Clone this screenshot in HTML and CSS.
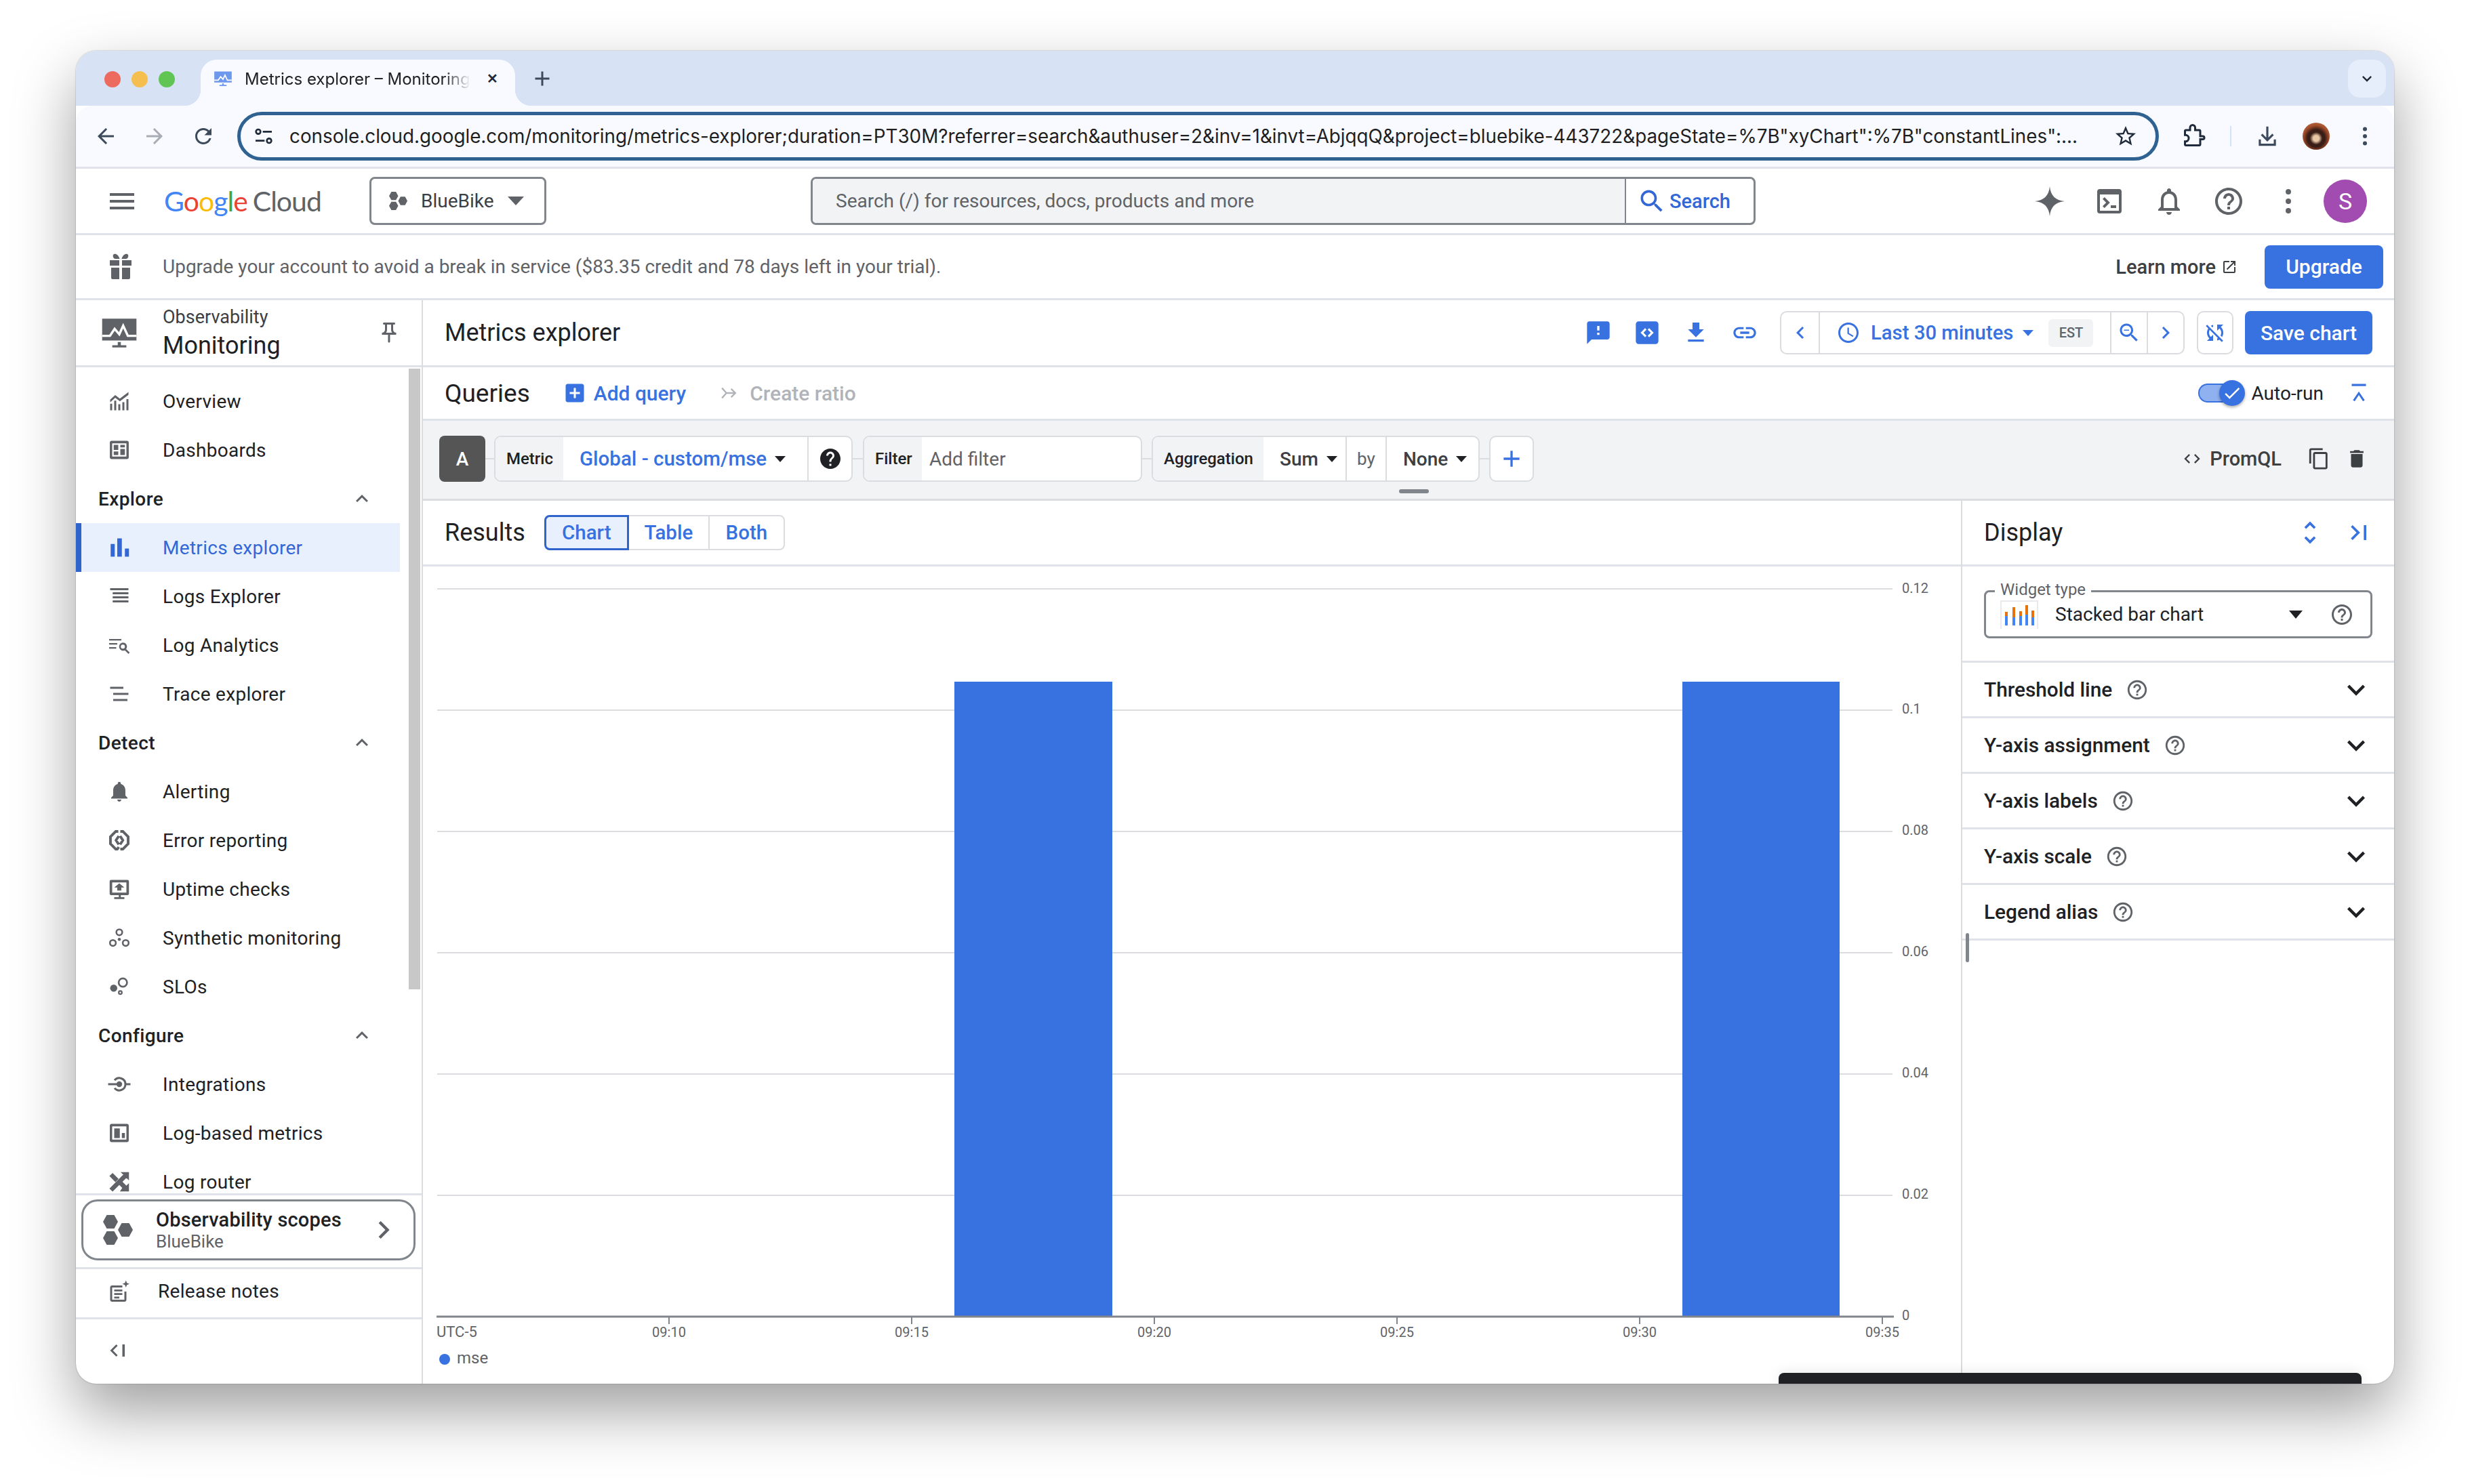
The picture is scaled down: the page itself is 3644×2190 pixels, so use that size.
FILE: index.html
```html
<!DOCTYPE html>
<html lang="en">
<head>
  <meta charset="UTF-8" />
  <title>Metrics explorer – Monitoring</title>
  <link rel="stylesheet" href="styles.css">
</head>
<body>
  <!-- icon sprite -->
  <svg class="sprite">
    <symbol id="i-menu" viewBox="0 0 24 24"><path d="M3 18h18v-2H3v2zm0-5h18v-2H3v2zm0-7v2h18V6H3z"/></symbol>
    <symbol id="i-back" viewBox="0 0 24 24"><path d="M20 11H7.83l5.59-5.59L12 4l-8 8 8 8 1.41-1.41L7.83 13H20v-2z"/></symbol>
    <symbol id="i-forward" viewBox="0 0 24 24"><path d="M4 11h12.17l-5.59-5.59L12 4l8 8-8 8-1.41-1.41L16.17 13H4v-2z"/></symbol>
    <symbol id="i-reload" viewBox="0 0 24 24"><path d="M17.65 6.35C16.2 4.9 14.21 4 12 4c-4.42 0-7.99 3.58-7.99 8s3.57 8 7.99 8c3.73 0 6.84-2.55 7.73-6h-2.08c-.82 2.33-3.04 4-5.65 4-3.31 0-6-2.69-6-6s2.69-6 6-6c1.66 0 3.14.69 4.22 1.78L13 11h7V4l-2.35 2.35z"/></symbol>
    <symbol id="i-tune" viewBox="0 0 24 24"><path d="M11 6h10v2H11zM3 16h10v2H3z"/><path d="M6 3.5a3.5 3.5 0 1 1 0 7 3.5 3.5 0 0 1 0-7zm0 2a1.5 1.5 0 1 0 0 3 1.5 1.5 0 0 0 0-3zM18 13.5a3.5 3.5 0 1 1 0 7 3.5 3.5 0 0 1 0-7zm0 2a1.5 1.5 0 1 0 0 3 1.5 1.5 0 0 0 0-3z"/></symbol>
    <symbol id="i-star" viewBox="0 0 24 24"><path d="M22 9.24l-7.19-.62L12 2 9.19 8.63 2 9.24l5.46 4.73L5.82 21 12 17.27 18.18 21l-1.63-7.03L22 9.24zM12 15.4l-3.76 2.27 1-4.28-3.32-2.88 4.38-.38L12 6.1l1.71 4.04 4.38.38-3.32 2.88 1 4.28L12 15.4z"/></symbol>
    <symbol id="i-ext" viewBox="0 0 24 24"><path fill="none" stroke="currentColor" stroke-width="2" d="M20.5 12H18V7a1 1 0 0 0-1-1h-4V3.5a2.5 2.5 0 0 0-5 0V6H4a1 1 0 0 0-1 1v3.8h.5a3.2 3.2 0 0 1 0 6.4H3V20a1 1 0 0 0 1 1h13a1 1 0 0 0 1-1v-5h2.5a1.5 1.5 0 0 0 0-3z"/></symbol>
    <symbol id="i-download" viewBox="0 0 24 24"><path d="M11 3h2v10.2l3.6-3.6L18 11l-6 6-6-6 1.4-1.4 3.6 3.6V3zM4 15h2v4h12v-4h2v6H4v-6z"/></symbol>
    <symbol id="i-dots" viewBox="0 0 24 24"><circle cx="12" cy="5" r="2"/><circle cx="12" cy="12" r="2"/><circle cx="12" cy="19" r="2"/></symbol>
    <symbol id="i-hex" viewBox="0 0 44 44"><path d="M5.500 0h11L22 10l-5.500 10h-11L0 10zM5.500 24h11L22 34l-5.500 10h-11L0 34zM27.500 12h11L44 22l-5.500 10h-11L22 22z"/></symbol>
    <symbol id="i-search" viewBox="0 0 24 24"><path d="M15.5 14h-.79l-.28-.27C15.41 12.59 16 11.11 16 9.5 16 5.91 13.09 3 9.5 3S3 5.91 3 9.5 5.91 16 9.5 16c1.61 0 3.09-.59 4.23-1.57l.27.28v.79l5 4.99L20.49 19l-4.99-5zm-6 0C7.01 14 5 11.99 5 9.5S7.01 5 9.5 5 14 7.01 14 9.5 11.99 14 9.5 14z"/></symbol>
    <symbol id="i-spark" viewBox="0 0 24 24"><path d="M12 1c.6 6.8 4.2 10.4 11 11-6.800.6-10.400 4.200-11 11-.6-6.800-4.200-10.400-11-11 6.800-.6 10.400-4.200 11-11z"/></symbol>
    <symbol id="i-terminal" viewBox="0 0 24 24"><path d="M5 3h14a2 2 0 0 1 2 2v14a2 2 0 0 1-2 2H5a2 2 0 0 1-2-2V5a2 2 0 0 1 2-2zm0 4v12h14V7H5zm2 3.400L8.400 9l4 4-4 4L7 15.600 9.600 13 7 10.400zM13 15h4v2h-4z"/></symbol>
    <symbol id="i-bell-o" viewBox="0 0 24 24"><path d="M12 22c1.100 0 2-.9 2-2h-4c0 1.100.9 2 2 2zm6-6v-5c0-3.070-1.630-5.640-4.500-6.320V4c0-.83-.67-1.500-1.500-1.500s-1.500.67-1.500 1.500v.68C7.640 5.360 6 7.920 6 11v5l-2 2v1h16v-1l-2-2zm-2 1H8v-6c0-2.480 1.510-4.500 4-4.500s4 2.020 4 4.500v6z"/></symbol>
    <symbol id="i-bell" viewBox="0 0 24 24"><path d="M12 22c1.100 0 2-.9 2-2h-4c0 1.100.89 2 2 2zm6-6v-5c0-3.070-1.640-5.640-4.500-6.320V4c0-.83-.67-1.500-1.500-1.500s-1.500.67-1.500 1.500v.68C7.630 5.360 6 7.920 6 11v5l-2 2v1h16v-1l-2-2z"/></symbol>
    <symbol id="i-help" viewBox="0 0 24 24"><path d="M11 18h2v-2h-2v2zm1-16C6.480 2 2 6.480 2 12s4.480 10 10 10 10-4.480 10-10S17.520 2 12 2zm0 18c-4.410 0-8-3.590-8-8s3.590-8 8-8 8 3.590 8 8-3.590 8-8 8zm0-14c-2.210 0-4 1.790-4 4h2c0-1.100.9-2 2-2s2 .9 2 2c0 2-3 1.750-3 5h2c0-2.250 3-2.500 3-5 0-2.210-1.790-4-4-4z"/></symbol>
    <symbol id="i-help-fill" viewBox="0 0 24 24"><path d="M12 2C6.480 2 2 6.480 2 12s4.480 10 10 10 10-4.480 10-10S17.520 2 12 2zm1 17h-2v-2h2v2zm2.070-7.750l-.9.92C13.450 12.900 13 13.500 13 15h-2v-.5c0-1.100.45-2.100 1.170-2.830l1.240-1.260c.37-.36.59-.86.59-1.410 0-1.100-.9-2-2-2s-2 .9-2 2H8c0-2.210 1.790-4 4-4s4 1.790 4 4c0 .88-.36 1.680-.93 2.250z"/></symbol>
    <symbol id="i-gift" viewBox="0 0 24 24"><path d="M4 7h7v4H4zM13 7h7v4h-7zM5 12.500h6V21H6a1 1 0 0 1-1-1zM13 12.500h6V20a1 1 0 0 1-1 1h-5zM7 2.500c1.500-.6 3.300.4 4.300 3.500H8C6.500 6 5.700 3.200 7 2.500zM17 2.500c1.300.7.500 3.500-1 3.500h-3.300c1-3.100 2.800-4.100 4.300-3.500z"/></symbol>
    <symbol id="i-open" viewBox="0 0 24 24"><path d="M19 19H5V5h7V3H5c-1.110 0-2 .9-2 2v14c0 1.100.89 2 2 2h14c1.100 0 2-.9 2-2v-7h-2v7zM14 3v2h3.590l-9.830 9.830 1.410 1.410L19 6.410V10h2V3h-7z"/></symbol>
    <symbol id="i-monitor" viewBox="0 0 48 40"><path d="M2 2h44v28H2z"/><path d="M22 32h4v4h7v3H15v-3h7z"/><path d="M2 24l10 0 6-9 6 7 5-11 6 13h11" fill="none" stroke="#fff" stroke-width="3"/></symbol>
    <symbol id="i-pin" viewBox="0 0 24 24"><path d="M14 4v5c0 1.120.37 2.160 1 3H9c.65-.86 1-1.900 1-3V4h4m3-2H7c-.55 0-1 .45-1 1s.45 1 1 1h1v5c0 1.660-1.340 3-3 3v2h5.970v7l1 1 1-1v-7H19v-2c-1.660 0-3-1.340-3-3V4h1c.55 0 1-.45 1-1s-.45-1-1-1z"/></symbol>
    <symbol id="i-overview" viewBox="0 0 24 24"><path d="M3 14.500h2V21H3zM7 11.500h2V21H7zM11 15h2v6h-2zM15 13h2v8h-2zM19 10h2v11h-2zM3 10.500L8 6l4.500 3.500L21 3v2.800l-8.400 6.300L8 8.600l-5 4.500z"/></symbol>
    <symbol id="i-dash" viewBox="0 0 24 24"><path d="M4.500 3h15A1.800 1.800 0 0 1 21.300 4.800v14.400a1.800 1.800 0 0 1-1.800 1.800h-15a1.800 1.800 0 0 1-1.800-1.800V4.800A1.800 1.800 0 0 1 4.500 3zM5 5.500v13h14v-13H5zM6.500 7H11v5H6.500zM13 7h4.500v2.500H13zM13 11h4.500v6H13zM6.500 13.500H11V17H6.500z"/></symbol>
    <symbol id="i-bars" viewBox="0 0 24 24"><path d="M3.500 8.500h4V21h-4zM10 3h4.500v18H10zM17.500 13h4v8h-4z"/></symbol>
    <symbol id="i-logs" viewBox="0 0 24 24"><path d="M3 4h18v2H3zM5.500 8h15.500v2H5.500zM5.500 12h15.500v2H5.500zM5.500 16h15.500v2H5.500z"/></symbol>
    <symbol id="i-analytics" viewBox="0 0 24 24"><path d="M2 6h12v1.500H2zM2 10h8v1.500H2zM2 14h7v1.500H2z"/><path d="M15.500 9.500a4 4 0 0 1 3.200 6.400l3.500 3.500-1.200 1.200-3.500-3.500a4 4 0 1 1-2-7.600zm0 2a2 2 0 1 0 0 4 2 2 0 0 0 0-4z"/></symbol>
    <symbol id="i-trace" viewBox="0 0 24 24"><path d="M3 5h13v2H3zM6 11h15v2H6zM6 17h14v2H6z"/></symbol>
    <symbol id="i-error" viewBox="0 0 24 24"><path fill="none" stroke="currentColor" stroke-width="2.600" d="M11 3.300H8.500L3.300 8.500v7l5.200 5.200H10l1.500-2M13 3.300h2.500l5.200 5.200v7l-5.200 5.200H13M11.500 7.800L8.800 12l2.700 4.200M12.800 7.800l2.700 4.200-2.700 4.200"/></symbol>
    <symbol id="i-uptime" viewBox="0 0 24 24"><path d="M4 3h16a1.500 1.500 0 0 1 1.500 1.500v12A1.500 1.500 0 0 1 20 18h-6.500v2H17v1.800H7V20h4.500v-2H4a1.500 1.500 0 0 1-1.500-1.500v-12A1.500 1.500 0 0 1 4 3zm1 2.500v10h14v-10H5zm7 .8l5 4.200h-3v3h-4v-3H7z"/></symbol>
    <symbol id="i-synth" viewBox="0 0 24 24"><g fill="none" stroke="currentColor" stroke-width="1.700"><circle cx="12" cy="6.500" r="2.900"/><circle cx="5.700" cy="17" r="2.900"/><circle cx="18.300" cy="17" r="2.900"/></g><circle cx="12" cy="13.500" r="1.500"/></symbol>
    <symbol id="i-slo" viewBox="0 0 24 24"><circle cx="6.500" cy="13.500" r="3.500"/><path d="M15.500 3a5 5 0 1 1 0 10 5 5 0 0 1 0-10zm0 1.800a3.200 3.200 0 1 0 0 6.400 3.200 3.200 0 0 0 0-6.400zM13 15.500a2.300 2.300 0 1 1 0 4.600 2.300 2.300 0 0 1 0-4.600zm0 1.500a.8.8 0 1 0 0 1.600.8.8 0 0 0 0-1.600z"/></symbol>
    <symbol id="i-integ" viewBox="0 0 24 24"><path d="M1 11h8.500v2H1zM18 11h5v2h-5zM6.500 7.600A7 7 0 0 1 19 12a7 7 0 0 1-12.500 4.400l1.700-1.100A5 5 0 0 0 17 12a5 5 0 0 0-8.800-3.300z"/><circle cx="12" cy="12" r="2.800"/></symbol>
    <symbol id="i-logmetric" viewBox="0 0 24 24"><path d="M4.500 3h15a1.800 1.800 0 0 1 1.800 1.800v14.400a1.800 1.800 0 0 1-1.800 1.800h-15a1.800 1.800 0 0 1-1.800-1.800V4.800A1.800 1.800 0 0 1 4.500 3zM5 5.500v13h14v-13H5zM7 7.500h5.500V17H7zM14.500 12h3v5h-3z"/></symbol>
    <symbol id="i-shuffle" viewBox="0 0 24 24"><path stroke="currentColor" stroke-width="1" d="M10.590 9.170L5.410 4 3 6.410l5.170 5.170 2.420-2.410zM14.500 3l2.040 2.040L3 18.590 5.410 21 18.960 7.460 21 9.500V3h-6.500zm.33 9.410l-2.410 2.410 3.130 3.130L13.500 21H21v-6.500l-2.040 2.040-4.130-4.130z"/></symbol>
    <symbol id="i-notes" viewBox="0 0 24 24"><path d="M3 6h12v2H5v12h12v-8h2v8a2 2 0 0 1-2 2H5a2 2 0 0 1-2-2V8a2 2 0 0 1 2-2zM7 10h8v1.800H7zM7 13.500h8v1.800H7zM7 17h5v1.800H7zM18.500 1l1 2.500 2.500 1-2.500 1-1 2.500-1-2.500-2.500-1 2.500-1z"/></symbol>
    <symbol id="i-collapse" viewBox="0 0 24 24"><path d="M10.410 7.410L5.820 12l4.590 4.590L9 18l-6-6 6-6zM15 6h2.400v12H15z"/></symbol>
    <symbol id="i-less" viewBox="0 0 24 24"><path d="M7.410 15.410L12 10.830l4.590 4.580L18 14l-6-6-6 6z"/></symbol>
    <symbol id="i-more" viewBox="0 0 24 24"><path d="M16.590 8.590L12 13.170 7.410 8.590 6 10l6 6 6-6z"/></symbol>
    <symbol id="i-left" viewBox="0 0 24 24"><path d="M15.410 7.410L14 6l-6 6 6 6 1.410-1.410L10.830 12z"/></symbol>
    <symbol id="i-right" viewBox="0 0 24 24"><path d="M10 6L8.590 7.410 13.170 12l-4.580 4.590L10 18l6-6z"/></symbol>
    <symbol id="i-feedback" viewBox="0 0 24 24"><path d="M20 2H4c-1.100 0-1.990.9-1.990 2L2 22l4-4h14c1.100 0 2-.9 2-2V4c0-1.100-.9-2-2-2zm-7 12h-2v-2h2v2zm0-4h-2V6h2v4z"/></symbol>
    <symbol id="i-code-box" viewBox="0 0 24 24"><path d="M4.500 2h15A2.500 2.500 0 0 1 22 4.500v15a2.500 2.500 0 0 1-2.500 2.500h-15A2.500 2.500 0 0 1 2 19.500v-15A2.500 2.500 0 0 1 4.500 2zm5.700 6L6.200 12l4 4 1.300-1.300L8.800 12l2.700-2.700zm3.600 0l-1.300 1.300 2.700 2.700-2.700 2.700 1.300 1.300 4-4z"/></symbol>
    <symbol id="i-dl-fill" viewBox="0 0 24 24"><path d="M19 9h-4V3H9v6H5l7 7 7-7zM5 18v2h14v-2H5z"/></symbol>
    <symbol id="i-link" viewBox="0 0 24 24"><path d="M3.900 12c0-1.710 1.390-3.100 3.100-3.100h4V7H7c-2.760 0-5 2.240-5 5s2.240 5 5 5h4v-1.900H7c-1.710 0-3.100-1.390-3.100-3.100zM8 13h8v-2H8v2zm9-6h-4v1.900h4c1.710 0 3.100 1.390 3.100 3.100s-1.390 3.100-3.100 3.100h-4V17h4c2.760 0 5-2.240 5-5s-2.240-5-5-5z"/></symbol>
    <symbol id="i-clock" viewBox="0 0 24 24"><path d="M11.990 2C6.470 2 2 6.480 2 12s4.470 10 9.990 10C17.520 22 22 17.520 22 12S17.520 2 11.990 2zM12 20c-4.420 0-8-3.580-8-8s3.580-8 8-8 8 3.580 8 8-3.580 8-8 8zm.5-13H11v6l5.250 3.150.75-1.230-4.500-2.670z"/></symbol>
    <symbol id="i-zoomout" viewBox="0 0 24 24"><path d="M15.500 14h-.79l-.28-.27C15.410 12.590 16 11.110 16 9.500 16 5.910 13.090 3 9.500 3S3 5.910 3 9.500 5.910 16 9.500 16c1.610 0 3.090-.59 4.230-1.570l.27.28v.79l5 4.990L20.490 19l-4.990-5zm-6 0C7.010 14 5 11.990 5 9.500S7.010 5 9.500 5 14 7.010 14 9.500 11.990 14 9.500 14zM7 9h5v1H7z"/></symbol>
    <symbol id="i-sync" viewBox="0 0 24 24"><path d="M10 6.350V4.260c-.8.21-1.550.54-2.230.96l1.460 1.460c.25-.12.5-.24.77-.33zm-7.140-.94l2.360 2.360C4.450 8.990 4 10.440 4 12c0 2.210.91 4.200 2.360 5.640L4 20h6v-6l-2.240 2.240C6.680 15.150 6 13.660 6 12c0-1 .25-1.940.68-2.770l8.080 8.080c-.25.13-.5.25-.77.34v2.090c.8-.21 1.550-.54 2.230-.96l2.360 2.360 1.270-1.270L4.140 4.140 2.860 5.410zM20 4h-6v6l2.240-2.240C17.320 8.850 18 10.340 18 12c0 1-.25 1.940-.68 2.770l1.460 1.460C19.550 15.010 20 13.560 20 12c0-2.210-.91-4.200-2.360-5.640L20 4z"/></symbol>
    <symbol id="i-addbox" viewBox="0 0 24 24"><path d="M19 3H5c-1.110 0-2 .9-2 2v14c0 1.100.89 2 2 2h14c1.100 0 2-.9 2-2V5c0-1.100-.9-2-2-2zm-2 10h-4v4h-2v-4H7v-2h4V7h2v4h4v2z"/></symbol>
    <symbol id="i-ratio" viewBox="0 0 24 24"><path d="M2 6.500L3.500 5l6 7-6 7L2 17.500 7 12zM8 11h9.200l-3.600-3.600L15 6l6 6-6 6-1.400-1.400 3.600-3.600H8z"/></symbol>
    <symbol id="i-add" viewBox="0 0 24 24"><path d="M19 13h-6v6h-2v-6H5v-2h6V5h2v6h6v2z"/></symbol>
    <symbol id="i-check" viewBox="0 0 24 24"><path d="M9 16.170L4.830 12l-1.420 1.410L9 19 21 7l-1.410-1.410z"/></symbol>
    <symbol id="i-top" viewBox="0 0 24 24"><path d="M5 3h14v2.200H5zM12 10.500l5.800 8.500-1.700 1.200L12 14l-4.100 6.200L6.200 19z"/></symbol>
    <symbol id="i-copy" viewBox="0 0 24 24"><path d="M16 1H4c-1.100 0-2 .9-2 2v14h2V3h12V1zm3 4H8c-1.100 0-2 .9-2 2v14c0 1.100.9 2 2 2h11c1.100 0 2-.9 2-2V7c0-1.100-.9-2-2-2zm0 16H8V7h11v14z"/></symbol>
    <symbol id="i-trash" viewBox="0 0 24 24"><path d="M6 19c0 1.100.9 2 2 2h8c1.100 0 2-.9 2-2V7H6v12zM19 4h-3.500l-1-1h-5l-1 1H5v2h14V4z"/></symbol>
    <symbol id="i-code" viewBox="0 0 24 24"><path d="M9.400 16.600L4.800 12l4.600-4.600L8 6l-6 6 6 6 1.400-1.400zm5.200 0l4.600-4.600-4.600-4.600L16 6l6 6-6 6-1.400-1.400z"/></symbol>
    <symbol id="i-unfold" viewBox="0 0 24 24"><path d="M12 5.830L15.170 9l1.410-1.410L12 3 7.410 7.590 8.830 9 12 5.830zm0 12.340L8.830 15l-1.410 1.410L12 21l4.590-4.590L15.170 15 12 18.170z"/></symbol>
    <symbol id="i-last" viewBox="0 0 24 24"><path d="M5.590 7.410L10.180 12l-4.590 4.590L7 18l6-6-6-6zM16 6h2v12h-2z"/></symbol>
  </svg>

  <div class="window">

    <!-- browser chrome -->
    <div class="tabstrip">
      <div class="lights">
        <span class="light red"></span>
        <span class="light yellow"></span>
        <span class="light green"></span>
      </div>
      <div class="tab">
        <svg class="favicon"><use href="#i-monitor"/></svg>
        <span class="tab-title">Metrics explorer – Monitoring</span>
        <span class="tab-close">✕</span>
      </div>
      <svg class="tab-plus"><use href="#i-add"/></svg>
      <div class="tab-list"><svg class="ic-28"><use href="#i-more"/></svg></div>
    </div>

    <div class="toolbar">
      <svg class="nav-btn"><use href="#i-back"/></svg>
      <svg class="nav-btn off"><use href="#i-forward"/></svg>
      <svg class="nav-btn"><use href="#i-reload"/></svg>
      <div class="omnibox">
        <svg class="tune"><use href="#i-tune"/></svg>
        <span class="url">console.cloud.google.com/monitoring/metrics-explorer;duration=PT30M?referrer=search&amp;authuser=2&amp;inv=1&amp;invt=AbjqqQ&amp;project=bluebike-443722&amp;pageState=%7B"xyChart":%7B"constantLines":...</span>
        <svg class="omni-star"><use href="#i-star"/></svg>
      </div>
      <svg class="ext-btn"><use href="#i-ext"/></svg>
      <span class="tool-sep"></span>
      <svg class="dl-btn"><use href="#i-download"/></svg>
      <span class="profile"></span>
      <svg class="dots-btn"><use href="#i-dots"/></svg>
    </div>

    <!-- cloud console header -->
    <header class="gcp-header">
      <svg class="hamburger"><use href="#i-menu"/></svg>
      <div class="logo"><span class="c-blue">G</span><span class="c-red">o</span><span class="c-yellow">o</span><span class="c-blue">g</span><span class="c-green">l</span><span class="c-red">e</span><span class="logo-cloud">Cloud</span></div>
      <div class="project">
        <svg class="project-hex"><use href="#i-hex"/></svg>
        <span>BlueBike</span>
        <span class="caret-lg"></span>
      </div>
      <div class="search">
        <div class="search-input">Search (/) for resources, docs, products and more</div>
        <div class="search-btn"><svg class="ic-44"><use href="#i-search"/></svg><span>Search</span></div>
      </div>
      <div class="head-icons">
        <svg class="head-ic"><use href="#i-spark"/></svg>
        <svg class="head-ic"><use href="#i-terminal"/></svg>
        <svg class="head-ic"><use href="#i-bell-o"/></svg>
        <svg class="head-ic"><use href="#i-help"/></svg>
        <svg class="head-ic"><use href="#i-dots"/></svg>
        <span class="avatar">S</span>
      </div>
    </header>

    <div class="banner">
      <svg class="gift"><use href="#i-gift"/></svg>
      <span class="banner-text">Upgrade your account to avoid a break in service ($83.35 credit and 78 days left in your trial).</span>
      <span class="learn">Learn more <svg class="ic-24"><use href="#i-open"/></svg></span>
      <button class="btn-primary upgrade">Upgrade</button>
    </div>

    <div class="content">

      <!-- left nav -->
      <aside class="sidebar">
        <div class="side-head">
          <svg class="side-logo"><use href="#i-monitor"/></svg>
          <div class="side-title">
            <div class="side-kicker">Observability</div>
            <div class="side-name">Monitoring</div>
          </div>
          <svg class="side-pin"><use href="#i-pin"/></svg>
        </div>

        <nav class="side-nav">
          <a class="nav-item"><svg class="nav-ic"><use href="#i-overview"/></svg>Overview</a>
          <a class="nav-item"><svg class="nav-ic"><use href="#i-dash"/></svg>Dashboards</a>
          <div class="nav-section">Explore<svg class="nav-ic"><use href="#i-less"/></svg></div>
          <a class="nav-item active"><svg class="nav-ic"><use href="#i-bars"/></svg>Metrics explorer</a>
          <a class="nav-item"><svg class="nav-ic"><use href="#i-logs"/></svg>Logs Explorer</a>
          <a class="nav-item"><svg class="nav-ic"><use href="#i-analytics"/></svg>Log Analytics</a>
          <a class="nav-item"><svg class="nav-ic"><use href="#i-trace"/></svg>Trace explorer</a>
          <div class="nav-section">Detect<svg class="nav-ic"><use href="#i-less"/></svg></div>
          <a class="nav-item"><svg class="nav-ic"><use href="#i-bell"/></svg>Alerting</a>
          <a class="nav-item"><svg class="nav-ic"><use href="#i-error"/></svg>Error reporting</a>
          <a class="nav-item"><svg class="nav-ic"><use href="#i-uptime"/></svg>Uptime checks</a>
          <a class="nav-item"><svg class="nav-ic"><use href="#i-synth"/></svg>Synthetic monitoring</a>
          <a class="nav-item"><svg class="nav-ic"><use href="#i-slo"/></svg>SLOs</a>
          <div class="nav-section">Configure<svg class="nav-ic"><use href="#i-less"/></svg></div>
          <a class="nav-item"><svg class="nav-ic"><use href="#i-integ"/></svg>Integrations</a>
          <a class="nav-item"><svg class="nav-ic"><use href="#i-logmetric"/></svg>Log-based metrics</a>
          <a class="nav-item"><svg class="nav-ic"><use href="#i-shuffle"/></svg>Log router</a>
          <div class="side-scroll"></div>
        </nav>

        <div class="scopes-wrap">
          <div class="scopes">
            <svg class="scopes-ic"><use href="#i-hex"/></svg>
            <div class="scopes-text">
              <div class="scopes-title">Observability scopes</div>
              <div class="scopes-sub">BlueBike</div>
            </div>
            <svg class="scopes-go"><use href="#i-right"/></svg>
          </div>
        </div>

        <div class="release"><svg class="nav-ic"><use href="#i-notes"/></svg>Release notes</div>
        <div class="side-foot"><svg class="nav-ic"><use href="#i-collapse"/></svg></div>
      </aside>

      <main class="main">

        <div class="title-row">
          <h1 class="page-title">Metrics explorer</h1>
          <div class="title-actions">
            <span class="act"><svg class="ic-40"><use href="#i-feedback"/></svg></span>
            <span class="act"><svg class="ic-40"><use href="#i-code-box"/></svg></span>
            <span class="act"><svg class="ic-40"><use href="#i-dl-fill"/></svg></span>
            <span class="act"><svg class="ic-40"><use href="#i-link"/></svg></span>
          </div>
          <div class="time-group">
            <span class="time-step prev"><svg class="ic-36"><use href="#i-left"/></svg></span>
            <div class="time-mid">
              <svg class="ic-36"><use href="#i-clock"/></svg>
              <span class="time-label">Last 30 minutes</span>
              <span class="caret-blue"></span>
              <span class="tz">EST</span>
            </div>
            <span class="time-step zoom"><svg class="ic-36"><use href="#i-zoomout"/></svg></span>
            <span class="time-step next"><svg class="ic-36"><use href="#i-right"/></svg></span>
          </div>
          <span class="sync-btn"><svg class="ic-36"><use href="#i-sync"/></svg></span>
          <button class="btn-primary save">Save chart</button>
        </div>

        <div class="queries-row">
          <h2 class="sec-title queries">Queries</h2>
          <span class="add-query"><svg class="ic-36"><use href="#i-addbox"/></svg>Add query</span>
          <span class="create-ratio"><svg class="ic-28"><use href="#i-ratio"/></svg>Create ratio</span>
          <div class="autorun">
            <span class="toggle"><span class="toggle-thumb"><svg class="ic-30"><use href="#i-check"/></svg></span></span>
            <span class="autorun-label">Auto-run</span>
            <svg class="ic-36 autorun-top"><use href="#i-top"/></svg>
          </div>
        </div>

        <div class="query-row">
          <span class="query-badge">A</span>
          <span class="conn w13"></span>
          <div class="qgroup metric">
            <span class="qlabel">Metric</span>
            <span class="qvalue blue">Global - custom/mse<span class="caret"></span></span>
            <span class="qhelp"><svg class="ic-36"><use href="#i-help-fill"/></svg></span>
          </div>
          <span class="conn w15"></span>
          <div class="qgroup filter">
            <span class="qlabel">Filter</span>
            <span class="qplaceholder">Add filter</span>
          </div>
          <span class="conn w14"></span>
          <div class="qgroup agg">
            <span class="qlabel">Aggregation</span>
            <span class="qvalue sum">Sum<span class="caret"></span></span>
            <span class="qby">by</span>
            <span class="qvalue none">None<span class="caret"></span></span>
          </div>
          <span class="conn w14"></span>
          <span class="qadd"><svg class="ic-40"><use href="#i-add"/></svg></span>
          <div class="query-tools">
            <svg class="ic-28"><use href="#i-code"/></svg>
            <span class="promql">PromQL</span>
            <svg class="ic-34"><use href="#i-copy"/></svg>
            <svg class="ic-34"><use href="#i-trash"/></svg>
          </div>
          <span class="drag-handle"></span>
        </div>

        <div class="results">
          <section class="results-left">
            <div class="results-bar">
              <h2 class="sec-title">Results</h2>
              <div class="segmented">
                <span class="seg selected">Chart</span>
                <span class="seg table">Table</span>
                <span class="seg both">Both</span>
              </div>
            </div>
            <!-- chart uses page coordinates in its viewBox -->
            <svg class="chart" viewBox="624 836 2269 1206">
              <g class="grid">
                <path d="M645 869H2792M645 1048H2792M645 1227H2792M645 1406H2792M645 1585H2792M645 1764H2792"/>
              </g>
              <rect class="bar" x="1408" y="1006" width="233" height="936"/>
              <rect class="bar" x="2482" y="1006" width="232" height="936"/>
              <path class="axis" d="M644 1943H2794"/>
              <path class="ticks" d="M987 1944V1954M1345 1944V1954M1703 1944V1954M2061 1944V1954M2419 1944V1954M2777 1944V1954"/>
              <g class="y-labels">
                <text x="2806" y="875">0.12</text>
                <text x="2806" y="1053">0.1</text>
                <text x="2806" y="1232">0.08</text>
                <text x="2806" y="1411">0.06</text>
                <text x="2806" y="1590">0.04</text>
                <text x="2806" y="1769">0.02</text>
                <text x="2806" y="1948">0</text>
              </g>
              <g class="x-labels">
                <text class="start" x="644" y="1973">UTC-5</text>
                <text x="987" y="1973">09:10</text>
                <text x="1345" y="1973">09:15</text>
                <text x="1703" y="1973">09:20</text>
                <text x="2061" y="1973">09:25</text>
                <text x="2419" y="1973">09:30</text>
                <text x="2777" y="1973">09:35</text>
              </g>
              <circle class="dot" cx="656" cy="2006" r="8"/>
              <text class="legend" x="674" y="2012">mse</text>
            </svg>
          </section>

          <section class="display">
            <div class="display-bar">
              <h2 class="sec-title">Display</h2>
              <svg class="ic-44 unfold"><use href="#i-unfold"/></svg>
              <svg class="ic-44"><use href="#i-last"/></svg>
            </div>
            <div class="widget-wrap">
              <div class="widget-field">
                <span class="widget-legend">Widget type</span>
                <span class="widget-thumb">
                  <svg class="widget-chart" viewBox="0 0 44 30">
                    <path class="s-blue" d="M1 16h4v14H1zM12 18h4v12h-4zM22 16h4v14h-4zM31 14h4v16h-4zM40 18h4v12h-4z"/>
                    <path class="s-orange" d="M1 10h4v6H1zM12 3h4v15h-4zM22 9h4v7h-4zM31 0h4v14h-4zM40 8h4v10h-4z"/>
                  </svg>
                </span>
                <span class="widget-name">Stacked bar chart</span>
                <span class="caret-lg dark"></span>
                <svg class="ic-36"><use href="#i-help"/></svg>
              </div>
            </div>
            <div class="acc-row"><span>Threshold line</span><svg class="ic-34 acc-help"><use href="#i-help"/></svg><svg class="acc-more"><use href="#i-more"/></svg></div>
            <div class="acc-row"><span>Y-axis assignment</span><svg class="ic-34 acc-help"><use href="#i-help"/></svg><svg class="acc-more"><use href="#i-more"/></svg></div>
            <div class="acc-row"><span>Y-axis labels</span><svg class="ic-34 acc-help"><use href="#i-help"/></svg><svg class="acc-more"><use href="#i-more"/></svg></div>
            <div class="acc-row"><span>Y-axis scale</span><svg class="ic-34 acc-help"><use href="#i-help"/></svg><svg class="acc-more"><use href="#i-more"/></svg></div>
            <div class="acc-row"><span>Legend alias</span><svg class="ic-34 acc-help"><use href="#i-help"/></svg><svg class="acc-more"><use href="#i-more"/></svg></div>
            <span class="panel-scroll"></span>
          </section>
        </div>

        <div class="toast"></div>
      </main>
    </div>
  </div>
</body>
</html>
```

FILE: styles.css
```css
* {
  box-sizing: border-box;
}

html,
body {
  margin: 0;
  background: #fff;
}

body {
  width: 3644px;
  height: 2190px;
  padding: 75px 112px 0;
  overflow: hidden;
  font-family: Roboto, "Liberation Sans", sans-serif;
  font-size: 28px;
  color: #202124;
}

h1,
h2 {
  margin: 0;
  font-weight: 400;
}

button {
  font-family: inherit;
  border: none;
}

svg {
  fill: currentColor;
  flex: none;
}

.sprite {
  display: none;
}

.ic-24 { width: 24px; height: 24px; }
.ic-28 { width: 28px; height: 28px; }
.ic-30 { width: 30px; height: 30px; }
.ic-34 { width: 34px; height: 34px; }
.ic-36 { width: 36px; height: 36px; }
.ic-40 { width: 40px; height: 40px; }
.ic-44 { width: 44px; height: 44px; }

.window {
  width: 3420px;
  height: 1967px;
  display: flex;
  flex-direction: column;
  background: #fff;
  border-radius: 30px;
  overflow: hidden;
  box-shadow: 0 40px 90px rgba(0, 0, 0, 0.38), 0 0 2px rgba(0, 0, 0, 0.35);
}

/* Browser chrome */
.tabstrip {
  height: 81px;
  flex: none;
  display: flex;
  align-items: flex-end;
  background: #d7e3f5;
  position: relative;
}

.lights {
  display: flex;
  gap: 16px;
  margin: 0 0 27px 42px;
}

.light {
  width: 24px;
  height: 24px;
  border-radius: 50%;
}

.red { background: #ec6a5e; }
.yellow { background: #f5bf4f; }
.green { background: #61c554; }

.tab {
  width: 464px;
  height: 68px;
  margin-left: 38px;
  padding: 0 16px 12px 19px;
  display: flex;
  align-items: center;
  background: #f8faff;
  border-radius: 24px 24px 0 0;
  position: relative;
  font-family: Inter, sans-serif;
  font-size: 24px;
}

.tab::before,
.tab::after {
  content: "";
  position: absolute;
  bottom: 0;
  width: 24px;
  height: 24px;
}

.tab::before {
  left: -24px;
  background: radial-gradient(circle at 0 0, transparent 24px, #f8faff 24.5px);
}

.tab::after {
  right: -24px;
  background: radial-gradient(circle at 100% 0, transparent 24px, #f8faff 24.5px);
}

.favicon {
  width: 28px;
  height: 24px;
  color: #6e97ee;
  margin-right: 18px;
}

.tab-title {
  width: 333px;
  overflow: hidden;
  white-space: nowrap;
  -webkit-mask-image: linear-gradient(90deg, #000 88%, transparent);
  mask-image: linear-gradient(90deg, #000 88%, transparent);
}

.tab-close {
  margin-left: 24px;
  font-size: 20px;
  font-weight: 700;
  color: #1f2a3a;
}

.tab-plus {
  width: 36px;
  height: 36px;
  margin: 0 0 22px 22px;
  color: #3c4a5c;
}

.tab-list {
  position: absolute;
  left: 3352px;
  top: 13px;
  width: 56px;
  height: 56px;
  border-radius: 18px;
  background: #e6edfb;
  display: flex;
  align-items: center;
  justify-content: center;
  color: #1f2a3a;
}

.toolbar {
  height: 93px;
  flex: none;
  display: flex;
  align-items: center;
  background: #f8faff;
  border-bottom: 3px solid #e0e3eb;
  border-radius: 24px 24px 0 0;
  position: relative;
  color: #3c4a5c;
}

.nav-btn {
  width: 36px;
  height: 36px;
  margin-right: 36px;
}

.nav-btn:first-child {
  margin-left: 26px;
}

.nav-btn:nth-child(3) {
  margin-right: 32px;
}

.nav-btn.off {
  color: #a8adb5;
}

.omnibox {
  width: 2835px;
  height: 72px;
  display: flex;
  align-items: center;
  padding: 0 20px 0 18px;
  border: 5px solid #2f6290;
  border-radius: 36px;
  background: #f8faff;
}

.tune {
  width: 32px;
  height: 32px;
  color: #1f2a3a;
}

.url {
  margin-left: 22px;
  width: 2650px;
  white-space: nowrap;
  overflow: hidden;
  font-family: Inter, sans-serif;
  font-size: 27.8px;
  color: #1f1f1f;
}

.omni-star {
  width: 36px;
  height: 36px;
  margin-left: 41px;
  color: #1f2a3a;
}

.ext-btn {
  width: 36px;
  height: 36px;
  margin-left: 34px;
  color: #1f2a3a;
}

.tool-sep {
  width: 2px;
  height: 30px;
  margin-left: 35px;
  background: #d3e3fd;
}

.dl-btn {
  width: 38px;
  height: 38px;
  margin-left: 34px;
}

.profile {
  width: 40px;
  height: 40px;
  margin-left: 33px;
  border-radius: 50%;
  background: radial-gradient(circle at 50% 58%, #e7c7a5 0 14%, #3a1d16 30% 42%, #a34d2a 62%, #c98a58 100%);
}

.dots-btn {
  width: 36px;
  height: 36px;
  margin-left: 34px;
}

/* Cloud console header */
.gcp-header {
  height: 98px;
  flex: none;
  display: flex;
  align-items: center;
  border-bottom: 3px solid #e0e2ea;
}

.hamburger {
  width: 48px;
  height: 48px;
  margin-left: 44px;
  color: #5f6368;
}

.logo {
  margin-left: 38px;
  font-family: Lato, sans-serif;
  font-size: 41px;
  letter-spacing: -1px;
  width: 266px;
  white-space: nowrap;
}

.logo-cloud {
  margin-left: 8px;
  color: #5f6368;
}

.c-blue { color: #4285f4; }
.c-red { color: #ea4335; }
.c-yellow { color: #fbbc05; }
.c-green { color: #34a853; }

.project {
  width: 261px;
  height: 71px;
  margin-left: 37px;
  display: flex;
  align-items: center;
  border: 3px solid #80868b;
  border-radius: 8px;
  padding-left: 26px;
  color: #3c4043;
}

.project-hex {
  width: 27px;
  height: 27px;
  color: #5f6368;
  margin-right: 20px;
}

.caret-lg {
  width: 0;
  height: 0;
  margin-left: 20px;
  border-left: 12px solid transparent;
  border-right: 12px solid transparent;
  border-top: 13px solid #5f6368;
}

.search {
  width: 1394px;
  height: 71px;
  margin-left: 390px;
  display: flex;
  border: 3px solid #80868b;
  border-radius: 8px;
  overflow: hidden;
}

.search-input {
  flex: 1;
  padding-left: 34px;
  display: flex;
  align-items: center;
  background: #f1f3f4;
  border-right: 2px solid #80868b;
  color: #5f6368;
}

.search-btn {
  width: 188px;
  display: flex;
  align-items: center;
  gap: 4px;
  padding-left: 16px;
  color: #3367d6;
  font-weight: 500;
  font-size: 29px;
}

.head-icons {
  flex: 1;
  display: flex;
  align-items: center;
  padding-left: 410px;
  color: #5f6368;
  gap: 40px;
}

.head-ic {
  width: 48px;
  height: 48px;
}

.avatar {
  width: 64px;
  height: 64px;
  margin-left: -12px;
  border-radius: 50%;
  display: flex;
  align-items: center;
  justify-content: center;
  background: #a24bb0;
  color: #fff;
  font-size: 34px;
}

.banner {
  height: 96px;
  flex: none;
  display: flex;
  align-items: center;
  padding-left: 42px;
  border-bottom: 3px solid #e0e2ea;
}

.gift {
  width: 48px;
  height: 48px;
  color: #5f6368;
}

.banner-text {
  margin-left: 38px;
  color: #5f6368;
}

.learn {
  margin-left: auto;
  display: flex;
  align-items: center;
  gap: 8px;
  color: #3c4043;
  font-size: 29px;
  font-weight: 500;
}

.btn-primary {
  background: #3871e0;
  color: #fff;
  font-size: 30px;
  font-weight: 500;
  border-radius: 8px;
  height: 64px;
}

.upgrade {
  width: 175px;
  margin: 0 16px 0 40px;
}

.content {
  flex: 1;
  min-height: 0;
  display: flex;
}

/* Left nav */
.sidebar {
  width: 512px;
  flex: none;
  display: flex;
  flex-direction: column;
  border-right: 2px solid #dadce0;
  color: #202124;
}

.side-head {
  height: 99px;
  flex: none;
  display: flex;
  align-items: center;
  border-bottom: 3px solid #e0e2ea;
  padding-left: 36px;
}

.side-logo {
  width: 56px;
  height: 46px;
  color: #5f6368;
}

.side-title {
  margin-left: 36px;
  flex: 1;
}

.side-kicker {
  font-size: 27px;
  line-height: 38px;
  color: #3c4043;
}

.side-name {
  font-size: 36px;
  line-height: 46px;
}

.side-pin {
  width: 36px;
  height: 36px;
  margin-right: 30px;
  color: #5f6368;
}

.side-nav {
  height: 1222px;
  flex: none;
  overflow: hidden;
  padding-top: 14px;
  position: relative;
  border-bottom: 3px solid #e0e2ea;
}

.nav-item {
  width: 478px;
  height: 72px;
  display: flex;
  align-items: center;
  padding-left: 46px;
  letter-spacing: 0.3px;
}

.nav-ic {
  width: 36px;
  height: 36px;
  margin-right: 46px;
  color: #5f6368;
}

.nav-item.active {
  background: #e8f0fe;
  border-left: 8px solid #2f64cc;
  padding-left: 38px;
  color: #3367d6;
}

.nav-item.active .nav-ic {
  color: #3367d6;
}

.nav-section {
  width: 440px;
  height: 72px;
  display: flex;
  align-items: center;
  justify-content: space-between;
  padding-left: 33px;
  font-weight: 500;
  letter-spacing: 0.4px;
}

.nav-section .nav-ic {
  margin-right: 0;
}

.side-scroll {
  position: absolute;
  left: 491px;
  top: 2px;
  width: 17px;
  height: 916px;
  background: #c8c8c8;
}

.scopes-wrap {
  height: 109px;
  flex: none;
  padding: 6px 8px 0;
  border-bottom: 3px solid #e0e2ea;
}

.scopes {
  width: 493px;
  height: 90px;
  display: flex;
  align-items: center;
  border: 3px solid #80868b;
  border-radius: 24px;
  padding-left: 29px;
}

.scopes-ic {
  width: 44px;
  height: 44px;
  color: #5f6368;
}

.scopes-text {
  margin-left: 34px;
  flex: 1;
}

.scopes-title {
  font-size: 29px;
  font-weight: 500;
  line-height: 34px;
  letter-spacing: 0.2px;
  white-space: nowrap;
}

.scopes-sub {
  font-size: 26px;
  line-height: 30px;
  color: #5f6368;
}

.scopes-go {
  width: 52px;
  height: 52px;
  margin-right: 18px;
  color: #5f6368;
}

.release {
  height: 74px;
  flex: none;
  display: flex;
  align-items: center;
  padding: 0 0 6px 46px;
  border-bottom: 3px solid #e0e2ea;
  letter-spacing: 0.3px;
}

.release .nav-ic {
  margin-right: 39px;
}

.side-foot {
  flex: 1;
  display: flex;
  align-items: center;
  padding: 0 0 4px 46px;
}

/* Main area */
.main {
  flex: 1;
  min-width: 0;
  display: flex;
  flex-direction: column;
  position: relative;
}

.title-row {
  height: 99px;
  flex: none;
  display: flex;
  align-items: center;
  padding: 0 32px;
  border-bottom: 3px solid #e0e2ea;
}

.page-title,
.sec-title {
  font-size: 36px;
  white-space: nowrap;
}

.sec-title.queries {
  font-size: 37px;
}

.title-actions {
  margin-left: auto;
  display: flex;
  color: #3871e0;
}

.act {
  width: 72px;
  display: flex;
  justify-content: center;
}

.time-group {
  width: 597px;
  height: 64px;
  margin-left: 16px;
  display: flex;
  border: 2px solid #dadce0;
  border-radius: 10px;
  color: #3871e0;
}

.time-step {
  display: flex;
  align-items: center;
  justify-content: center;
}

.time-step.prev { width: 55px; }
.time-step.zoom { width: 56px; border-left: 2px solid #dadce0; border-right: 2px solid #dadce0; }
.time-step.next { flex: 1; }

.time-mid {
  width: 430px;
  display: flex;
  align-items: center;
  padding-left: 24px;
  border-left: 2px solid #dadce0;
}

.time-label {
  margin-left: 15px;
  font-size: 29.3px;
  font-weight: 500;
  white-space: nowrap;
}

.caret-blue,
.caret {
  width: 0;
  height: 0;
  display: inline-block;
  border-left: 8px solid transparent;
  border-right: 8px solid transparent;
}

.caret-blue {
  margin-left: 14px;
  border-top: 9px solid #3871e0;
}

.caret {
  margin-left: 12px;
  vertical-align: middle;
  border-top: 9px solid #202124;
}

.tz {
  width: 66px;
  height: 41px;
  margin-left: 22px;
  display: flex;
  align-items: center;
  justify-content: center;
  background: #f1f3f4;
  border-radius: 6px;
  color: #5f6368;
  font-size: 20px;
  font-weight: 500;
}

.sync-btn {
  width: 54px;
  height: 64px;
  margin-left: 18px;
  display: flex;
  align-items: center;
  justify-content: center;
  border: 2px solid #dadce0;
  border-radius: 10px;
  color: #3871e0;
}

.save {
  width: 188px;
  margin-left: 17px;
}

.queries-row {
  height: 79px;
  flex: none;
  display: flex;
  align-items: center;
  padding: 0 34px 0 32px;
  border-bottom: 3px solid #e0e2ea;
}

.add-query {
  margin-left: 48px;
  display: flex;
  align-items: center;
  gap: 10px;
  color: #3871e0;
  font-size: 30px;
  font-weight: 500;
}

.create-ratio {
  margin-left: 50px;
  display: flex;
  align-items: center;
  gap: 16px;
  color: #b0b3b8;
  font-size: 30px;
  font-weight: 500;
}

.autorun {
  margin-left: auto;
  display: flex;
  align-items: center;
}

.toggle {
  width: 57px;
  height: 28px;
  position: relative;
  background: #8fb1f0;
  border: 2px solid #3871e0;
  border-right: none;
  border-radius: 14px;
}

.toggle-thumb {
  position: absolute;
  right: -12px;
  top: -7px;
  width: 38px;
  height: 38px;
  border-radius: 50%;
  background: #3871e0;
  color: #fff;
  display: flex;
  align-items: center;
  justify-content: center;
  box-shadow: 0 2px 4px rgba(0, 0, 0, 0.35);
}

.autorun-label {
  margin-left: 21px;
}

.autorun-top {
  margin-left: 34px;
  color: #3871e0;
}

.query-row {
  height: 118px;
  flex: none;
  display: flex;
  align-items: flex-start;
  padding: 22px 38px 0 24px;
  background: #f1f3f4;
  border-bottom: 3px solid #dcdde1;
  position: relative;
}

.query-badge {
  width: 68px;
  height: 68px;
  display: flex;
  align-items: center;
  justify-content: center;
  background: #555;
  border-radius: 8px;
  color: #fff;
  font-weight: 500;
}

.conn {
  height: 2px;
  margin-top: 33px;
  background: #dadce0;
}

.w13 { width: 13px; }
.w14 { width: 14px; }
.w15 { width: 15px; }

.qgroup {
  height: 68px;
  display: flex;
  align-items: stretch;
  background: #fff;
  border: 2px solid #dadce0;
  border-radius: 10px;
  overflow: hidden;
}

.qgroup.metric { width: 529px; }
.qgroup.filter { width: 412px; }
.qgroup.agg { width: 484px; }

.qlabel {
  display: flex;
  align-items: center;
  padding: 0 16px;
  background: #f1f3f4;
  font-size: 24px;
  font-weight: 500;
}

.metric .qlabel { width: 100px; }
.filter .qlabel { width: 85px; }
.agg .qlabel { width: 163px; }

.qvalue {
  display: flex;
  align-items: center;
  padding-left: 24px;
  color: #3c4043;
  font-weight: 500;
}

.qvalue.blue {
  width: 362px;
  color: #3871e0;
  font-size: 29.5px;
  border-right: 2px solid #dadce0;
}

.qvalue.sum {
  width: 123px;
  border-right: 2px solid #dadce0;
}

.qvalue.none {
  flex: 1;
}

.qhelp {
  flex: 1;
  display: flex;
  align-items: center;
  justify-content: center;
}

.qplaceholder {
  display: flex;
  align-items: center;
  padding-left: 11px;
  color: #5f6368;
}

.qby {
  width: 59px;
  display: flex;
  align-items: center;
  justify-content: center;
  color: #5f6368;
  font-size: 26px;
  border-right: 2px solid #dadce0;
}

.qadd {
  width: 66px;
  height: 68px;
  display: flex;
  align-items: center;
  justify-content: center;
  background: #fff;
  border: 2px solid #dadce0;
  border-radius: 10px;
  color: #3871e0;
}

.query-tools {
  margin-left: auto;
  height: 68px;
  display: flex;
  align-items: center;
  color: #3c4043;
  font-weight: 500;
  font-size: 29px;
}

.promql {
  margin: 0 38px 0 12px;
}

.query-tools .ic-34:last-child {
  margin-left: 22px;
}

.drag-handle {
  position: absolute;
  left: 1440px;
  top: 101px;
  width: 44px;
  height: 6px;
  border-radius: 3px;
  background: #80868b;
}

.results {
  flex: 1;
  min-height: 0;
  display: flex;
}

.results-left {
  width: 2269px;
  flex: none;
  display: flex;
  flex-direction: column;
}

.results-bar {
  height: 97px;
  flex: none;
  display: flex;
  align-items: center;
  padding-left: 32px;
  border-bottom: 3px solid #e0e2ea;
}

.segmented {
  width: 355px;
  height: 52px;
  margin-left: 28px;
  display: flex;
  border: 2px solid #dadce0;
  border-radius: 8px;
  color: #3871e0;
  font-weight: 500;
  font-size: 29.5px;
}

.seg {
  display: flex;
  align-items: center;
  justify-content: center;
}

.seg.selected {
  width: 125px;
  margin: -2px 0 -2px -2px;
  background: #e8f0fe;
  border: 3px solid #2f64cc;
  border-radius: 8px 0 0 8px;
}

.seg.table {
  width: 119px;
  border-right: 2px solid #dadce0;
}

.seg.both {
  flex: 1;
}

.chart {
  width: 2269px;
  height: 1206px;
  display: block;
  fill: none;
}

.grid path {
  stroke: #dadce0;
  stroke-width: 2;
}

.bar {
  fill: #3871e0;
}

.axis {
  stroke: #80868b;
  stroke-width: 3;
}

.ticks {
  stroke: #80868b;
  stroke-width: 2;
}

.y-labels text,
.x-labels text,
.legend {
  fill: #5f6368;
  font-size: 20px;
}

.x-labels text {
  text-anchor: middle;
}

.x-labels .start {
  text-anchor: start;
  font-size: 22px;
}

.chart .legend {
  font-size: 24px;
}

.dot {
  fill: #3871e0;
}

/* Display panel */
.display {
  flex: 1;
  min-width: 0;
  border-left: 2px solid #dadce0;
  position: relative;
}

.display-bar {
  height: 97px;
  display: flex;
  align-items: center;
  padding: 0 30px 0 32px;
  border-bottom: 3px solid #e0e2ea;
  color: #3871e0;
}

.display-bar .sec-title {
  color: #202124;
  flex: 1;
}

.unfold {
  margin-right: 28px;
}

.widget-wrap {
  height: 142px;
  padding: 35px 32px 0;
  border-bottom: 3px solid #e0e2ea;
}

.widget-field {
  height: 71px;
  display: flex;
  align-items: center;
  padding: 0 24px 0 21px;
  border: 3px solid #80868b;
  border-radius: 8px;
  position: relative;
  color: #5f6368;
}

.widget-legend {
  position: absolute;
  left: 13px;
  top: -17px;
  padding: 0 8px;
  background: #fff;
  font-size: 24px;
  line-height: 26px;
}

.widget-thumb {
  width: 56px;
  height: 42px;
  display: flex;
  align-items: center;
  justify-content: center;
  border: 2px solid #e8eaed;
  border-bottom: none;
}

.widget-chart {
  width: 44px;
  height: 30px;
}

.s-blue { fill: #4285f4; }
.s-orange { fill: #e8710a; }

.widget-name {
  margin-left: 25px;
  flex: 1;
  color: #202124;
}

.caret-lg.dark {
  margin: 0 40px 0 0;
  border-left-width: 10px;
  border-right-width: 10px;
  border-top: 12px solid #202124;
}

.acc-row {
  height: 82px;
  display: flex;
  align-items: center;
  padding: 0 30px 0 32px;
  border-bottom: 3px solid #e0e2ea;
  font-size: 29.8px;
  font-weight: 500;
}

.acc-help {
  margin-left: 20px;
  color: #5f6368;
}

.acc-more {
  margin-left: auto;
  color: #202124;
  width: 52px;
  height: 52px;
}

.panel-scroll {
  position: absolute;
  left: 5px;
  top: 638px;
  width: 5px;
  height: 43px;
  border-radius: 3px;
  background: #80868b;
}

.toast {
  position: absolute;
  right: 48px;
  bottom: 0;
  width: 860px;
  height: 16px;
  background: #202124;
  border-radius: 8px 8px 0 0;
  box-shadow: 0 0 20px rgba(0, 0, 0, 0.1);
}
```
